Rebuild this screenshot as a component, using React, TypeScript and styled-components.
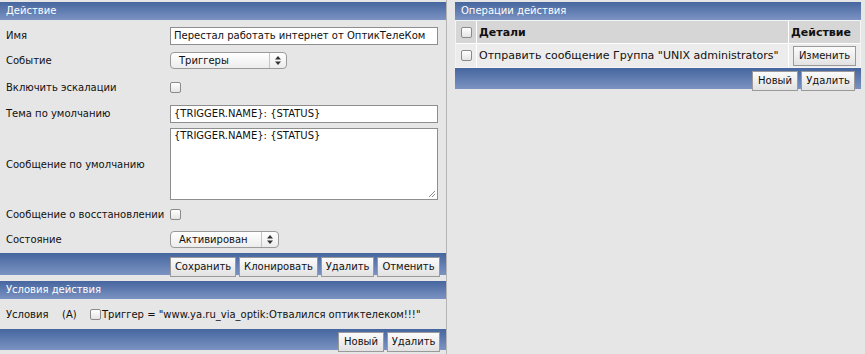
import * as React from 'react';
import styled, { createGlobalStyle } from 'styled-components';

const GlobalStyle = createGlobalStyle`
  html, body {
    margin: 0;
    padding: 0;
    background: #e6e6e6;
  }
  body {
    font-family: "DejaVu Sans", Verdana, sans-serif;
    font-size: 10px;
    color: #111;
  }
`;

const Page = styled.div`
  display: flex;
  align-items: stretch;
  width: 865px;
  height: 354px;
  overflow: hidden;
`;

const LeftColumn = styled.div`
  width: 446px;
  border-right: 1px solid #b4b4b4;
  padding-top: 2px;
  display: flex;
  flex-direction: column;
`;

const RightColumn = styled.div`
  width: 406px;
  margin-left: 8px;
  padding-top: 2px;
  display: flex;
  flex-direction: column;
`;

const Header = styled.div<{ $gap?: number }>`
  height: 18px;
  line-height: 18px;
  padding-left: 6px;
  margin-top: ${(p) => p.$gap ?? 0}px;
  color: #fff;
  background: linear-gradient(#46669f, #7b93c2);
`;

const Form = styled.div`
  display: grid;
  grid-template-columns: 170px 1fr;
  padding: 4px 0 1px;
`;

const Label = styled.div`
  display: flex;
  align-items: center;
  padding-left: 6px;
  white-space: nowrap;
`;

const Field = styled.div<{ $h: number }>`
  display: flex;
  align-items: center;
  height: ${(p) => p.$h}px;
`;

const TextInput = styled.div`
  box-sizing: border-box;
  width: 268px;
  height: 18px;
  padding: 0 3px;
  line-height: 16px;
  background: #fff;
  border: 1px solid #8e8e8e;
  white-space: nowrap;
`;

const TextArea = styled.div`
  position: relative;
  box-sizing: border-box;
  width: 268px;
  height: 72px;
  padding: 1px 3px;
  background: #fff;
  border: 1px solid #8e8e8e;
`;

const Grip = styled.svg`
  position: absolute;
  right: 1px;
  bottom: 1px;
`;

const SelectBox = styled.div<{ $w: number }>`
  box-sizing: border-box;
  display: flex;
  width: ${(p) => p.$w}px;
  height: 17px;
  border: 1px solid #9a9a9a;
  border-radius: 4px;
  background: linear-gradient(#ffffff, #ececec);
`;

const SelectText = styled.span`
  flex: 1;
  padding-left: 8px;
  line-height: 15px;
`;

const SelectArrows = styled.span`
  width: 16px;
  border-left: 1px solid #c4c4c4;
  display: flex;
  align-items: center;
  justify-content: center;
`;

const Check = styled.span`
  box-sizing: border-box;
  display: inline-block;
  width: 11px;
  height: 11px;
  border: 1px solid #8a8a8a;
  border-radius: 2px;
  background: linear-gradient(#ffffff, #e4e4e4);
  flex-shrink: 0;
`;

const Footer = styled.div<{ $h?: number; $pt?: number }>`
  display: flex;
  justify-content: flex-end;
  gap: 3px;
  height: ${(p) => p.$h ?? 21}px;
  padding: ${(p) => p.$pt ?? 3}px 6px 0 0;
  box-sizing: border-box;
  background: linear-gradient(#46669f, #7b93c2);
`;

const Button = styled.div<{ $w: number }>`
  box-sizing: border-box;
  flex-shrink: 0;
  width: ${(p) => p.$w}px;
  height: 20px;
  line-height: 18px;
  font-size: 10px;
  font-weight: 400;
  text-align: center;
  white-space: nowrap;
  border: 1px solid #9a9a9a;
  background: linear-gradient(#fbfbfb, #e2e2e2);
  color: #111;
`;

const CondRow = styled.div`
  display: flex;
  align-items: center;
  height: 30px;
  padding-left: 6px;
  white-space: nowrap;
`;

const CondLabel = styled.span<{ $w: number }>`
  width: ${(p) => p.$w}px;
`;

const CondText = styled.span`
  margin-left: 1px;
`;

const Table = styled.div`
  display: grid;
  grid-template-columns: 20px 1fr 71px;
  gap: 1px;
  font-size: 11px;
  background: #fff;
  border: 1px solid #f4f4f4;
`;

const Cell = styled.div<{ $head?: boolean; $center?: boolean }>`
  display: flex;
  align-items: center;
  justify-content: ${(p) => (p.$center ? 'center' : 'flex-start')};
  height: ${(p) => (p.$head ? 22 : 23)}px;
  padding-left: ${(p) => (p.$center ? 0 : 2)}px;
  font-weight: ${(p) => (p.$head ? 700 : 400)};
  background: ${(p) => (p.$head ? '#d6d6d6' : '#ececec')};
  white-space: nowrap;
  overflow: hidden;
`;

const Arrows = () => (
  <svg width="6" height="9" viewBox="0 0 6 9">
    <path d="M0 3.5 L3 0 L6 3.5 Z M0 5.5 L3 9 L6 5.5 Z" fill="#333" />
  </svg>
);

const Select = ({ value, width }: { value: string; width: number }) => (
  <SelectBox $w={width}>
    <SelectText>{value}</SelectText>
    <SelectArrows>
      <Arrows />
    </SelectArrows>
  </SelectBox>
);

const App: React.FC = () => {
  return (
    <>
      <GlobalStyle />
      <Page>
        <LeftColumn>
          <Header>Действие</Header>
          <Form>
            <Label>Имя</Label>
            <Field $h={23}>
              <TextInput>Перестал работать интернет от ОптикТелеКом</TextInput>
            </Field>

            <Label>Событие</Label>
            <Field $h={27}>
              <Select value="Триггеры" width={117} />
            </Field>

            <Label>Включить эскалации</Label>
            <Field $h={27}>
              <Check />
            </Field>

            <Label>Тема по умолчанию</Label>
            <Field $h={25}>
              <TextInput>{'{TRIGGER.NAME}: {STATUS}'}</TextInput>
            </Field>

            <Label>Сообщение по умолчанию</Label>
            <Field $h={76}>
              <TextArea>
                {'{TRIGGER.NAME}: {STATUS}'}
                <Grip width="8" height="8" viewBox="0 0 8 8">
                  <path d="M1 7 L7 1 M4 7 L7 4" stroke="#888" strokeWidth="1" />
                </Grip>
              </TextArea>
            </Field>

            <Label>Сообщение о восстановлении</Label>
            <Field $h={24}>
              <Check />
            </Field>

            <Label>Состояние</Label>
            <Field $h={26}>
              <Select value="Активирован" width={109} />
            </Field>
          </Form>
          <Footer $h={22} $pt={4}>
            <Button $w={66}>Сохранить</Button>
            <Button $w={79}>Клонировать</Button>
            <Button $w={53}>Удалить</Button>
            <Button $w={63}>Отменить</Button>
          </Footer>

          <Header $gap={6}>Условия действия</Header>
          <CondRow>
            <CondLabel $w={56}>Условия</CondLabel>
            <CondLabel $w={28}>(A)</CondLabel>
            <Check />
            <CondText>Триггер = "www.ya.ru_via_optik:Отвалился оптиктелеком!!!"</CondText>
          </CondRow>
          <Footer>
            <Button $w={46}>Новый</Button>
            <Button $w={53}>Удалить</Button>
          </Footer>
        </LeftColumn>

        <RightColumn>
          <Header>Операции действия</Header>
          <Table>
            <Cell $head $center>
              <Check />
            </Cell>
            <Cell $head>Детали</Cell>
            <Cell $head>Действие</Cell>
            <Cell $center>
              <Check />
            </Cell>
            <Cell>Отправить сообщение Группа "UNIX administrators"</Cell>
            <Cell $center>
              <Button $w={63}>Изменить</Button>
            </Cell>
          </Table>
          <Footer>
            <Button $w={46}>Новый</Button>
            <Button $w={54}>Удалить</Button>
          </Footer>
        </RightColumn>
      </Page>
    </>
  );
};

export default App;
